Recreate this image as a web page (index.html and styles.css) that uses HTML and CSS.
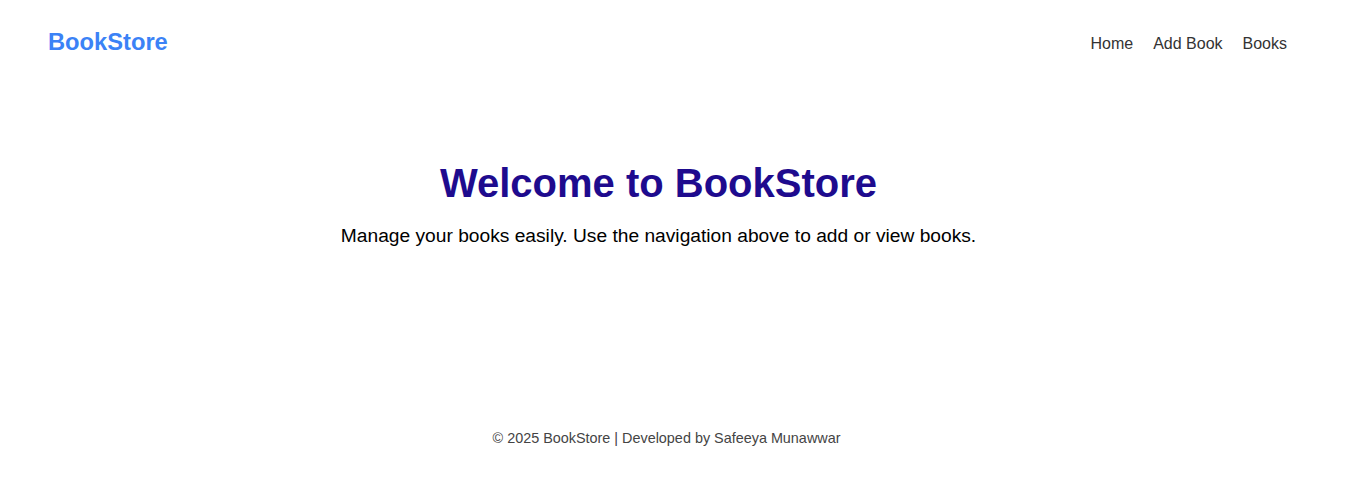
FILE: index.html
```html
<!DOCTYPE html>
<html lang="en">
<head>
<meta charset="utf-8">
<title>BookStore</title>
<link rel="stylesheet" href="styles.css">
</head>
<body>
<header class="navbar">
  <a class="logo" href="#">BookStore</a>
  <nav class="nav-links">
    <a href="#">Home</a>
    <a href="#">Add Book</a>
    <a href="#">Books</a>
  </nav>
</header>
<main class="hero">
  <h1 class="hero-title">Welcome to BookStore</h1>
  <p class="hero-text">Manage your books easily. Use the navigation above to add or view books.</p>
</main>
<footer class="footer">
  <p>© 2025 BookStore | Developed by Safeeya Munawwar</p>
</footer>
</body>
</html>
```
FILE: styles.css
```css
html, body {
  margin: 0;
  padding: 0;
  background: #ffffff;
  font-family: "Liberation Sans", Arial, sans-serif;
}

body {
  min-height: 490px;
  display: flex;
  flex-direction: column;
}

a {
  text-decoration: none;
}

.navbar {
  height: 84px;
  display: flex;
  align-items: center;
  justify-content: space-between;
  padding: 0 66px 0 48px;
}

.logo {
  font-size: 23.7px;
  font-weight: bold;
  color: #3b82f6;
  line-height: 28px;
}

.nav-links {
  display: flex;
  gap: 20px;
  padding-top: 4px;
}

.nav-links a {
  font-size: 16px;
  color: #333333;
  line-height: 18px;
}

.hero {
  padding: 76px 36px 0 0;
  text-align: center;
  flex: 0 0 auto;
  height: 270px;
  box-sizing: border-box;
}

.hero-title {
  margin: 0 0 18px;
  font-size: 40px;
  line-height: 46px;
  font-weight: bold;
  color: #1e0b8e;
}

.hero-text {
  margin: 0;
  font-size: 19.2px;
  line-height: 23px;
  color: #000000;
}

.footer {
  padding: 76px 20px 0 0;
  text-align: center;
}

.footer p {
  margin: 0;
  font-size: 14.4px;
  line-height: 16px;
  color: #444444;
}
```
